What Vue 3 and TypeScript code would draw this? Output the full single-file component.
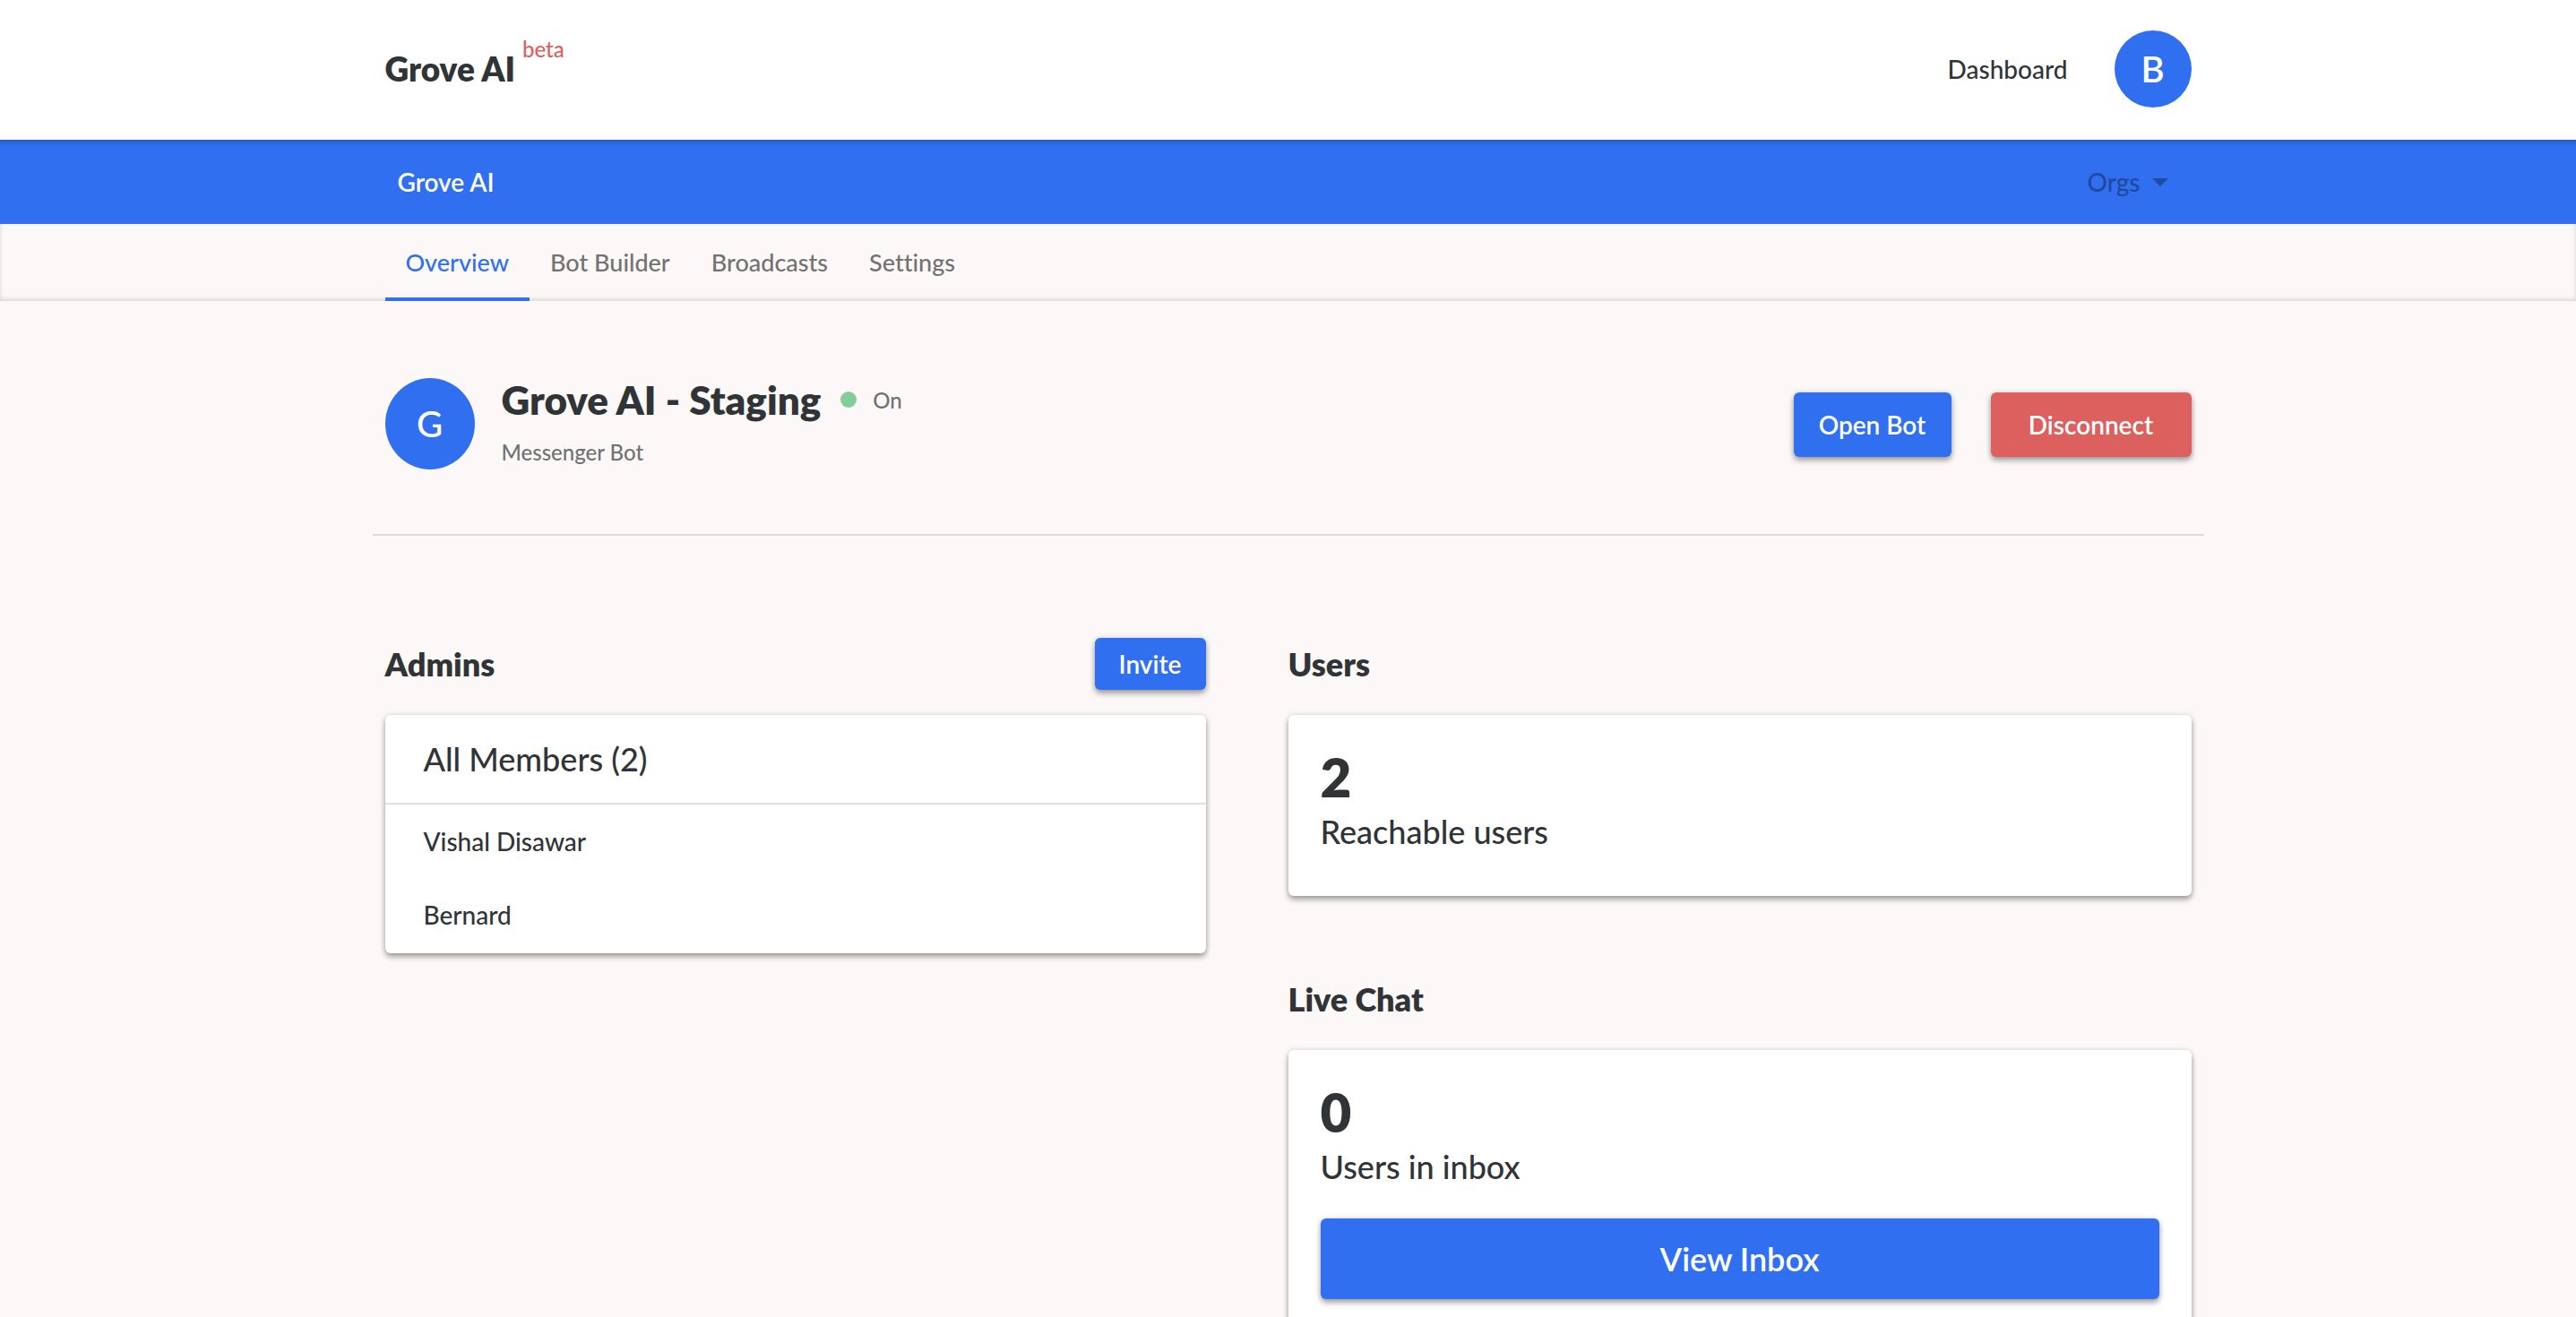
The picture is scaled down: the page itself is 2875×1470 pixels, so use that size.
<script setup lang="ts">
interface Tab {
  label: string
  active: boolean
}

const tabs: Tab[] = [
  { label: 'Overview', active: true },
  { label: 'Bot Builder', active: false },
  { label: 'Broadcasts', active: false },
  { label: 'Settings', active: false },
]

const members: string[] = ['Vishal Disawar', 'Bernard']
</script>

<template>
  <div class="page">
    <header class="topbar">
      <div class="container topbar-row">
        <a class="brand" href="#">Grove AI<span class="beta">beta</span></a>
        <nav class="account">
          <a class="account-link" href="#">Dashboard</a>
          <button class="avatar avatar-user" type="button" aria-label="Account menu">B</button>
        </nav>
      </div>
    </header>

    <div class="orgbar">
      <div class="container orgbar-row">
        <a class="org-name" href="#">Grove AI</a>
        <button class="org-menu" type="button">
          Orgs
          <svg class="caret" viewBox="0 0 18 9" aria-hidden="true"><path d="M0 0h18L9 9z" /></svg>
        </button>
      </div>
    </div>

    <div class="tabbar">
      <nav class="container tabs">
        <a
          v-for="tab in tabs"
          :key="tab.label"
          class="tab"
          :class="{ active: tab.active }"
          href="#"
        >{{ tab.label }}</a>
      </nav>
    </div>

    <main class="main">
      <section class="bot">
        <div class="avatar avatar-bot">G</div>
        <div class="bot-info">
          <div class="bot-title">
            <h1>Grove AI - Staging</h1>
            <span class="dot"></span>
            <span class="status">On</span>
          </div>
          <p class="bot-type">Messenger Bot</p>
        </div>
        <div class="bot-actions">
          <button class="btn" type="button">Open Bot</button>
          <button class="btn btn-danger" type="button">Disconnect</button>
        </div>
      </section>

      <div class="columns">
        <section class="column-left">
          <div class="section-head">
            <h2>Admins</h2>
            <button class="btn btn-small" type="button">Invite</button>
          </div>
          <div class="card members">
            <h3>All Members ({{ members.length }})</h3>
            <ul>
              <li v-for="member in members" :key="member">{{ member }}</li>
            </ul>
          </div>
        </section>

        <div class="column-right">
          <section>
            <div class="section-head"><h2>Users</h2></div>
            <div class="card stat">
              <p class="stat-value">2</p>
              <p class="stat-label">Reachable users</p>
            </div>
          </section>
          <section>
            <div class="section-head"><h2>Live Chat</h2></div>
            <div class="card stat stat-action">
              <p class="stat-value">0</p>
              <p class="stat-label">Users in inbox</p>
              <button class="btn btn-large" type="button">View Inbox</button>
            </div>
          </section>
        </div>
      </div>
    </main>
  </div>
</template>

<style>
body {
  margin: 0;
  background: #fcf8f7;
}
</style>

<style scoped>
.page {
  --blue: #3070f0;
  --red: #dc605e;
  --ink: #303436;
  --muted: #727272;
  --shadow: 0 4px 6px rgba(0, 0, 0, 0.34), 0 0 6px rgba(0, 0, 0, 0.12);
  min-height: 100vh;
  font-family: Lato, 'Open Sans', sans-serif;
  font-size: 28px;
  font-weight: 500;
  font-variant-ligatures: none;
  color: var(--ink);
  background: #fcf8f7;
}

h1,
h2,
h3,
p,
ul {
  margin: 0;
  padding: 0;
}

a {
  color: inherit;
  text-decoration: none;
}

button {
  border: 0;
  padding: 0;
  font: inherit;
  cursor: pointer;
}

.container,
.main {
  box-sizing: border-box;
  max-width: 2044px;
  margin: 0 auto;
}

.container {
  padding: 0 14px;
}

.topbar {
  padding: 34px 0 36px;
  background: #fff;
}

.topbar-row,
.orgbar-row,
.account {
  display: flex;
  align-items: center;
  justify-content: space-between;
}

.brand {
  display: flex;
  align-items: center;
  font-size: 37px;
  line-height: 48px;
  font-weight: 800;
}

.beta {
  margin: 0 0 44px 8px;
  font-size: 24px;
  line-height: 24px;
  font-weight: 500;
  color: var(--red);
}

.account {
  gap: 52px;
}

.avatar {
  display: flex;
  align-items: center;
  justify-content: center;
  flex: none;
  border-radius: 50%;
  background: var(--blue);
  color: #fff;
  font-size: 40px;
}

.avatar-user {
  width: 86px;
  height: 86px;
  font-weight: 600;
}

.avatar-bot {
  width: 100px;
  height: 102px;
}

.orgbar {
  background: linear-gradient(rgba(0, 0, 0, 0.18), transparent 7px) var(--blue);
}

.orgbar-row {
  min-height: 94px;
  padding: 0 40px 0 28px;
}

.org-name {
  font-weight: 600;
  color: #fff;
}

.org-menu {
  display: flex;
  align-items: center;
  gap: 13px;
  background: none;
  color: #2049a0;
}

.caret {
  width: 18px;
  height: 9px;
  fill: currentColor;
}

.tabbar {
  box-shadow: inset 0 -2px 5px rgba(0, 0, 0, 0.14);
}

.tabs {
  display: flex;
}

.tab {
  padding: 4px 23px 0;
  border-bottom: 4px solid transparent;
  font-size: 27px;
  line-height: 78px;
  color: var(--muted);
}

.tab.active {
  border-color: var(--blue);
  color: var(--blue);
}

.bot {
  display: flex;
  align-items: center;
  padding: 86px 14px 72px;
  border-bottom: 2px solid #dfdbda;
}

.bot-info {
  flex: 1;
  margin-left: 30px;
}

.bot-title {
  display: flex;
  align-items: center;
}

h1 {
  font-size: 44px;
  line-height: 46px;
  font-weight: 800;
}

.dot {
  width: 18px;
  height: 18px;
  margin: 0 18px 0 22px;
  border-radius: 50%;
  background: #84cc9a;
}

.status,
.bot-type {
  font-size: 24px;
  color: var(--muted);
}

.bot-type {
  margin-top: 18px;
  line-height: 36px;
}

.bot-actions {
  display: flex;
  gap: 44px;
  padding-top: 2px;
}

.btn {
  min-width: 176px;
  height: 72px;
  border-radius: 6px;
  background: var(--blue);
  box-shadow: var(--shadow);
  color: #fff;
  font-weight: 600;
}

.btn-danger {
  min-width: 224px;
  background: var(--red);
}

.btn-small {
  min-width: 124px;
  height: 58px;
}

.btn-large {
  width: 100%;
  height: 90px;
  margin-top: 34px;
  font-size: 36px;
}

.columns {
  display: grid;
  grid-template-columns: 1fr 1fr;
  padding: 114px 14px 0;
}

.column-left {
  padding-right: 92px;
}

.column-right {
  display: flex;
  flex-direction: column;
  gap: 86px;
}

.section-head {
  display: flex;
  align-items: center;
  justify-content: space-between;
  min-height: 58px;
  margin-bottom: 28px;
}

h2 {
  font-size: 36px;
  font-weight: 800;
}

.card {
  border-radius: 6px;
  background: #fff;
  box-shadow: var(--shadow);
}

.members {
  padding-bottom: 2px;
}

h3 {
  padding: 0 43px;
  border-bottom: 2px solid #dfe1e1;
  font-size: 36px;
  line-height: 98px;
  font-weight: 500;
}

li {
  padding: 0 43px;
  line-height: 82px;
  list-style: none;
}

.stat {
  padding: 36px 36px 48px;
}

.stat-action {
  padding-bottom: 36px;
}

.stat-value {
  font-size: 60px;
  line-height: 66px;
  font-weight: 800;
}

.stat-label {
  margin-top: 4px;
  font-size: 36px;
  line-height: 48px;
}
</style>
